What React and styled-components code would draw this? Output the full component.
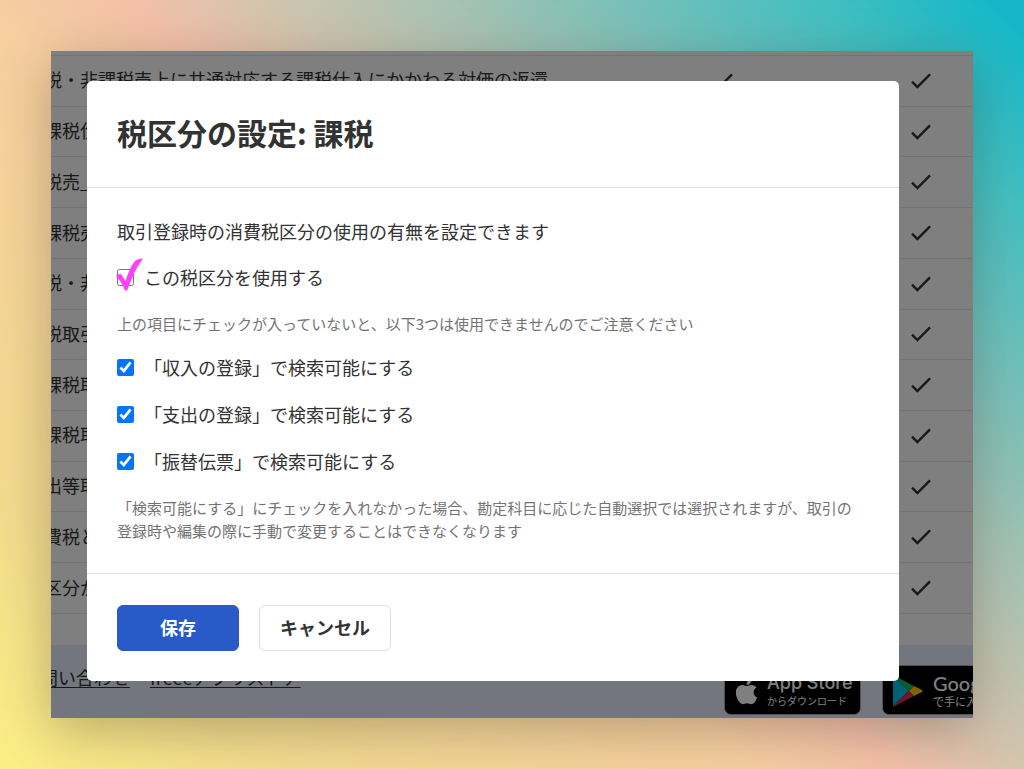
import React from 'react'
import styled, { createGlobalStyle, css } from 'styled-components'
import { FaApple } from 'react-icons/fa'

const rows = [
    '税・非課税売上に共通対応する課税仕入にかかわる対価の返還',
    '課税仕入',
    '税売_',
    '課税売上',
    '税・非課税',
    '税取引',
    '課税取引',
    '課税取引',
    '出等取引',
    '費税と',
    '区分が',
]

const searchOptions = [
    { id: 'income', label: '「収入の登録」で検索可能にする' },
    { id: 'expense', label: '「支出の登録」で検索可能にする' },
    { id: 'journal', label: '「振替伝票」で検索可能にする' },
]

function CheckMark() {
    return (
        <CheckIcon viewBox='0 0 24 24' aria-hidden='true'>
            <path d='M3 12.6 8.4 18 21 5.4' />
        </CheckIcon>
    )
}

function TaxTable() {
    return (
        <Table>
            <tbody>
                {rows.map((name, i) => (
                    <tr key={i}>
                        <Cell>{name}</Cell>
                        <Cell mark><CheckMark /></Cell>
                        <Cell mark><CheckMark /></Cell>
                    </tr>
                ))}
            </tbody>
        </Table>
    )
}

function PageFooter() {
    return (
        <Footer>
            <FooterLinks>
                <a href='#contact'>問い合わせ</a>
                <a href='#apps'>freeeアプリストア</a>
            </FooterLinks>
            <Stores>
                <Badge href='#appstore'>
                    <FaApple size={29} />
                    <BadgeText>
                        <StoreName>App Store</StoreName>
                        <StoreNote>からダウンロード</StoreNote>
                    </BadgeText>
                </Badge>
                <Badge href='#googleplay' wide>
                    <svg width='30' height='32' viewBox='0 0 30 32' aria-hidden='true'>
                        <path fill='#00c3e6' d='M0 1v30l16-15z' />
                        <path fill='#12b85c' d='M0 0v1l16 15 5-5z' />
                        <path fill='#e8294a' d='M0 32v-1l16-15 5 5z' />
                        <path fill='#ffc800' d='M21 11l8 4q1 1 0 2l-8 4-5-5z' />
                    </svg>
                    <BadgeText>
                        <StoreName google>Google Play</StoreName>
                        <StoreNote google>で手に入れよう</StoreNote>
                    </BadgeText>
                </Badge>
            </Stores>
        </Footer>
    )
}

function TaxDialog() {
    return (
        <Dialog role='dialog' aria-modal='true' aria-labelledby='dialog-title'>
            <DialogHeader>
                <Title id='dialog-title'>税区分の設定: 課税</Title>
            </DialogHeader>
            <DialogBody>
                <Lead>取引登録時の消費税区分の使用の有無を設定できます</Lead>
                <Option htmlFor='use'>
                    <BoxWrap>
                        <Checkbox id='use' type='checkbox' />
                        <Scribble viewBox='0 0 30 34' aria-hidden='true'>
                            <path d='M0 18.5Q3 15 5.5 16.5L9.500 23.500Q13 11 18 4 21 .5 27 .5 21.500 8 18.500 14.500 14.500 24 11 32.500 10 33.500 8.500 31.500 5 23 0 18.5z' />
                        </Scribble>
                    </BoxWrap>
                    この税区分を使用する
                </Option>
                <Note>上の項目にチェックが入っていないと、以下3つは使用できませんのでご注意ください</Note>
                {searchOptions.map((o) => (
                    <Option key={o.id} htmlFor={o.id}>
                        <Checkbox id={o.id} type='checkbox' defaultChecked />
                        {o.label}
                    </Option>
                ))}
                <Note>
                    「検索可能にする」にチェックを入れなかった場合、勘定科目に応じた自動選択では選択されますが、取引の登録時や編集の際に手動で変更することはできなくなります
                </Note>
            </DialogBody>
            <DialogFooter>
                <Button primary>保存</Button>
                <Button>キャンセル</Button>
            </DialogFooter>
        </Dialog>
    )
}

export default function App() {
    return (
        <Backdrop>
            <GlobalStyle />
            <Screen>
                <TaxTable />
                <PageFooter />
                <Overlay>
                    <TaxDialog />
                </Overlay>
            </Screen>
        </Backdrop>
    )
}

const GlobalStyle = createGlobalStyle`
    * {
        box-sizing: border-box;
    }
    body {
        margin: 0;
        color: #323232;
        font-family: "Noto Sans CJK JP", sans-serif;
        font-size: 18px;
        line-height: 24px;
    }
`

const Backdrop = styled.div`
    min-height: 100vh;
    padding: 51px;
    background: linear-gradient(
        45deg,
        #fbef84 0%,
        #f3db8e 15%,
        #f6cea0 42%,
        #f4c0a8 50%,
        #d0c4ae 58%,
        #a6c2b2 68%,
        #7fc0b8 76%,
        #45bfc0 88%,
        #16b8c8 98%
    );
`

const Screen = styled.div`
    position: relative;
    overflow: hidden;
    padding-top: 4px;
    background: #fff;
    box-shadow: 0 12px 48px rgba(0, 0, 0, 0.25);
`

const Table = styled.table`
    /* scrolled sideways inside the screen */
    width: calc(100% + 54px);
    height: 559px;
    margin: 0 0 31px -7px;
    table-layout: fixed;
    border-collapse: separate;
    border-spacing: 0;
    border-top: 1px solid #e9e7e5;
`

const Cell = styled.td.withConfig({ shouldForwardProp: (p) => p !== 'mark' })`
    padding: 0 0 3px;
    border-bottom: 1px solid #e9e7e5;
    white-space: nowrap;
    vertical-align: middle;
    ${(props) => props.mark && css`
        width: 198px;
        padding: 0;
        text-align: center;
    `}
`

const CheckIcon = styled.svg`
    display: block;
    width: 24px;
    height: 24px;
    margin: 0 auto;
    fill: none;
    stroke: #323232;
    stroke-width: 2.4;
`

const Footer = styled.footer`
    display: flex;
    justify-content: space-between;
    height: 73px;
    padding: 20px 0 3px;
    background: #e8edff;
`

const FooterLinks = styled.nav`
    display: flex;
    gap: 20px;
    margin-left: -11px;
    a {
        color: #323232;
        text-underline-offset: 2px;
    }
`

const Stores = styled.div`
    display: flex;
    flex: none;
    gap: 21px;
    margin-right: -64px;
`

const Badge = styled.a.withConfig({ shouldForwardProp: (p) => p !== 'wide' })`
    display: flex;
    align-items: center;
    gap: ${(props) => (props.wide ? '10px' : '6px')};
    width: ${(props) => (props.wide ? '155px' : '137px')};
    height: 50px;
    padding: ${(props) => (props.wide ? '2px 10px 0' : '2px 7px 0')};
    border: 1px solid #a6a6a6;
    border-radius: 7px;
    background: #000;
    color: #fff;
    text-decoration: none;
    svg {
        flex: none;
    }
`

const BadgeText = styled.span`
    display: flex;
    flex-direction: column;
    white-space: nowrap;
`

const StoreName = styled.span.withConfig({ shouldForwardProp: (p) => p !== 'google' })`
    font-family: ${(props) => (props.google ? 'Lato' : 'Inter')}, sans-serif;
    font-size: ${(props) => (props.google ? '20px' : '18px')};
    font-weight: 500;
    line-height: 20px;
`

const StoreNote = styled.span.withConfig({ shouldForwardProp: (p) => p !== 'google' })`
    font-size: ${(props) => (props.google ? '11px' : '10px')};
    line-height: 16px;
`

const Overlay = styled.div`
    position: absolute;
    inset: 0;
    padding: 30px 74px 37px 36px;
    background: rgba(0, 0, 0, 0.5);
`

const Dialog = styled.section`
    border-radius: 5px;
    background: #fff;
`

const DialogHeader = styled.header`
    padding: 30px 30px 33px;
    border-bottom: 1px solid #e1dfdd;
`

const Title = styled.h1`
    margin: 0;
    font-size: 30px;
    font-weight: 700;
    line-height: 43px;
`

const DialogBody = styled.div`
    padding: 31px 30px 11px;
`

const Lead = styled.p`
    margin: 0 0 22px;
`

const Option = styled.label`
    display: flex;
    align-items: center;
    gap: 10px;
    margin-bottom: 23px;
`

const BoxWrap = styled.span`
    position: relative;
    display: flex;
`

const Checkbox = styled.input`
    width: 17px;
    height: 17px;
    margin: 0;
    accent-color: #0075ff;
`

/* hand-drawn tick over the empty box */
const Scribble = styled.svg`
    position: absolute;
    top: -11px;
    left: -1px;
    width: 30px;
    height: 34px;
    fill: #ff40ff;
    pointer-events: none;
`

const Note = styled.p`
    max-width: 748px;
    margin: 0 0 20px;
    color: #737373;
    font-size: 15px;
    line-height: 23px;
`

const DialogFooter = styled.footer`
    display: flex;
    gap: 20px;
    padding: 31px 30px 30px;
    border-top: 1px solid #e1dfdd;
`

const Button = styled.button.withConfig({ shouldForwardProp: (p) => p !== 'primary' })`
    height: 46px;
    padding: 0 20px 3px;
    border: 1px solid #e1dfdd;
    border-radius: 6px;
    background: #fff;
    color: #323232;
    font-family: inherit;
    font-size: 18px;
    font-weight: 700;
    ${(props) => props.primary && css`
        min-width: 122px;
        border-color: #285ac8;
        background: #285ac8;
        color: #fff;
    `}
`
